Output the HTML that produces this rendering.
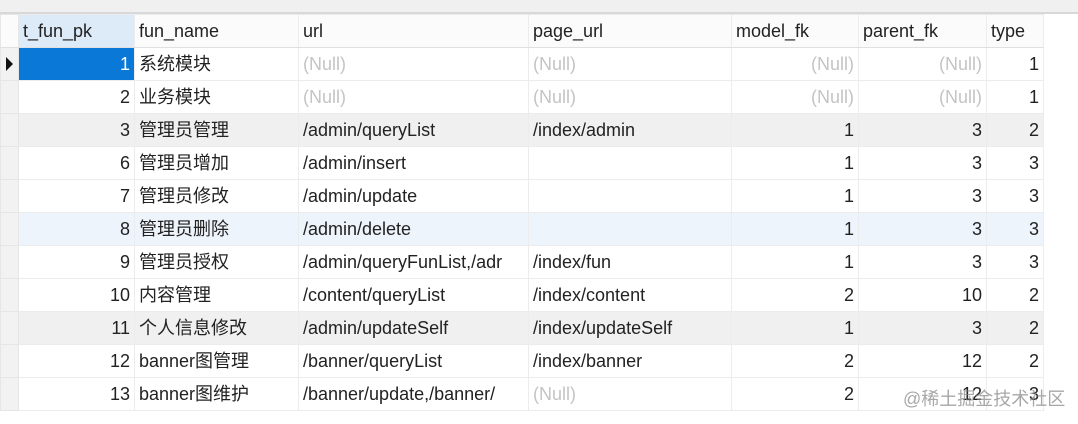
<!DOCTYPE html>
<html><head><meta charset="utf-8"><style>
body{margin:0;width:1078px;height:424px;background:#fff;overflow:hidden;font-family:"Segoe UI","Liberation Sans","Noto Sans CJK SC",sans-serif;font-size:18px;color:#222;position:relative}
.top{position:absolute;left:0;top:0;width:1078px;height:12px;background:#f0f0f0;border-bottom:2px solid #d8d8d8}
table{position:absolute;left:0;top:14px;border-collapse:collapse;table-layout:fixed}
td{height:32px;padding:0 4px;border:1px solid #ececec;white-space:nowrap;overflow:hidden;line-height:32px}
tr.h td{background:#fbfbfb;border-bottom:1px solid #e0e0e0}
td.ind{background:#f2f2f2;padding:0;border-color:#e6e6e6}
td.ind svg{display:block}
.r{text-align:right}
.n{color:#c4c4c4}
tr.g td{background:#f0f0f0}
tr.b td{background:#eef4fb}
tr.g td.ind,tr.b td.ind{background:#f2f2f2}
.sel{background:#0a78d6!important;color:#fff}
.wm{position:absolute;left:903px;top:385px;font-size:18px;color:rgba(130,130,130,0.7);font-family:"Liberation Sans","Noto Sans CJK SC",sans-serif}
</style></head><body>
<div class="top"></div>
<table>
<colgroup><col style="width:17px"><col style="width:116px"><col style="width:164px"><col style="width:230px"><col style="width:203px"><col style="width:127px"><col style="width:128px"><col style="width:57px"></colgroup>
<tr class="h"><td class="ind"></td><td style="background:#ddeaf7">t_fun_pk</td><td>fun_name</td><td>url</td><td>page_url</td><td>model_fk</td><td>parent_fk</td><td>type</td></tr>
<tr><td class="ind"><svg width="17" height="32"><path d="M5 9 L12 16 L5 23Z" fill="#111"/></svg></td><td class="r sel">1</td><td>系统模块</td><td class="n">(Null)</td><td class="n">(Null)</td><td class="r n">(Null)</td><td class="r n">(Null)</td><td class="r">1</td></tr>
<tr><td class="ind"></td><td class="r">2</td><td>业务模块</td><td class="n">(Null)</td><td class="n">(Null)</td><td class="r n">(Null)</td><td class="r n">(Null)</td><td class="r">1</td></tr>
<tr class="g"><td class="ind"></td><td class="r">3</td><td>管理员管理</td><td>/admin/queryList</td><td>/index/admin</td><td class="r">1</td><td class="r">3</td><td class="r">2</td></tr>
<tr><td class="ind"></td><td class="r">6</td><td>管理员增加</td><td>/admin/insert</td><td></td><td class="r">1</td><td class="r">3</td><td class="r">3</td></tr>
<tr><td class="ind"></td><td class="r">7</td><td>管理员修改</td><td>/admin/update</td><td></td><td class="r">1</td><td class="r">3</td><td class="r">3</td></tr>
<tr class="b"><td class="ind"></td><td class="r">8</td><td>管理员删除</td><td>/admin/delete</td><td></td><td class="r">1</td><td class="r">3</td><td class="r">3</td></tr>
<tr><td class="ind"></td><td class="r">9</td><td>管理员授权</td><td>/admin/queryFunList,/adr</td><td>/index/fun</td><td class="r">1</td><td class="r">3</td><td class="r">3</td></tr>
<tr><td class="ind"></td><td class="r">10</td><td>内容管理</td><td>/content/queryList</td><td>/index/content</td><td class="r">2</td><td class="r">10</td><td class="r">2</td></tr>
<tr class="g"><td class="ind"></td><td class="r">11</td><td>个人信息修改</td><td>/admin/updateSelf</td><td>/index/updateSelf</td><td class="r">1</td><td class="r">3</td><td class="r">2</td></tr>
<tr><td class="ind"></td><td class="r">12</td><td>banner图管理</td><td>/banner/queryList</td><td>/index/banner</td><td class="r">2</td><td class="r">12</td><td class="r">2</td></tr>
<tr><td class="ind"></td><td class="r">13</td><td>banner图维护</td><td>/banner/update,/banner/</td><td class="n">(Null)</td><td class="r">2</td><td class="r">12</td><td class="r">3</td></tr>
</table>
<div class="wm">@稀土掘金技术社区</div>
</body></html>
